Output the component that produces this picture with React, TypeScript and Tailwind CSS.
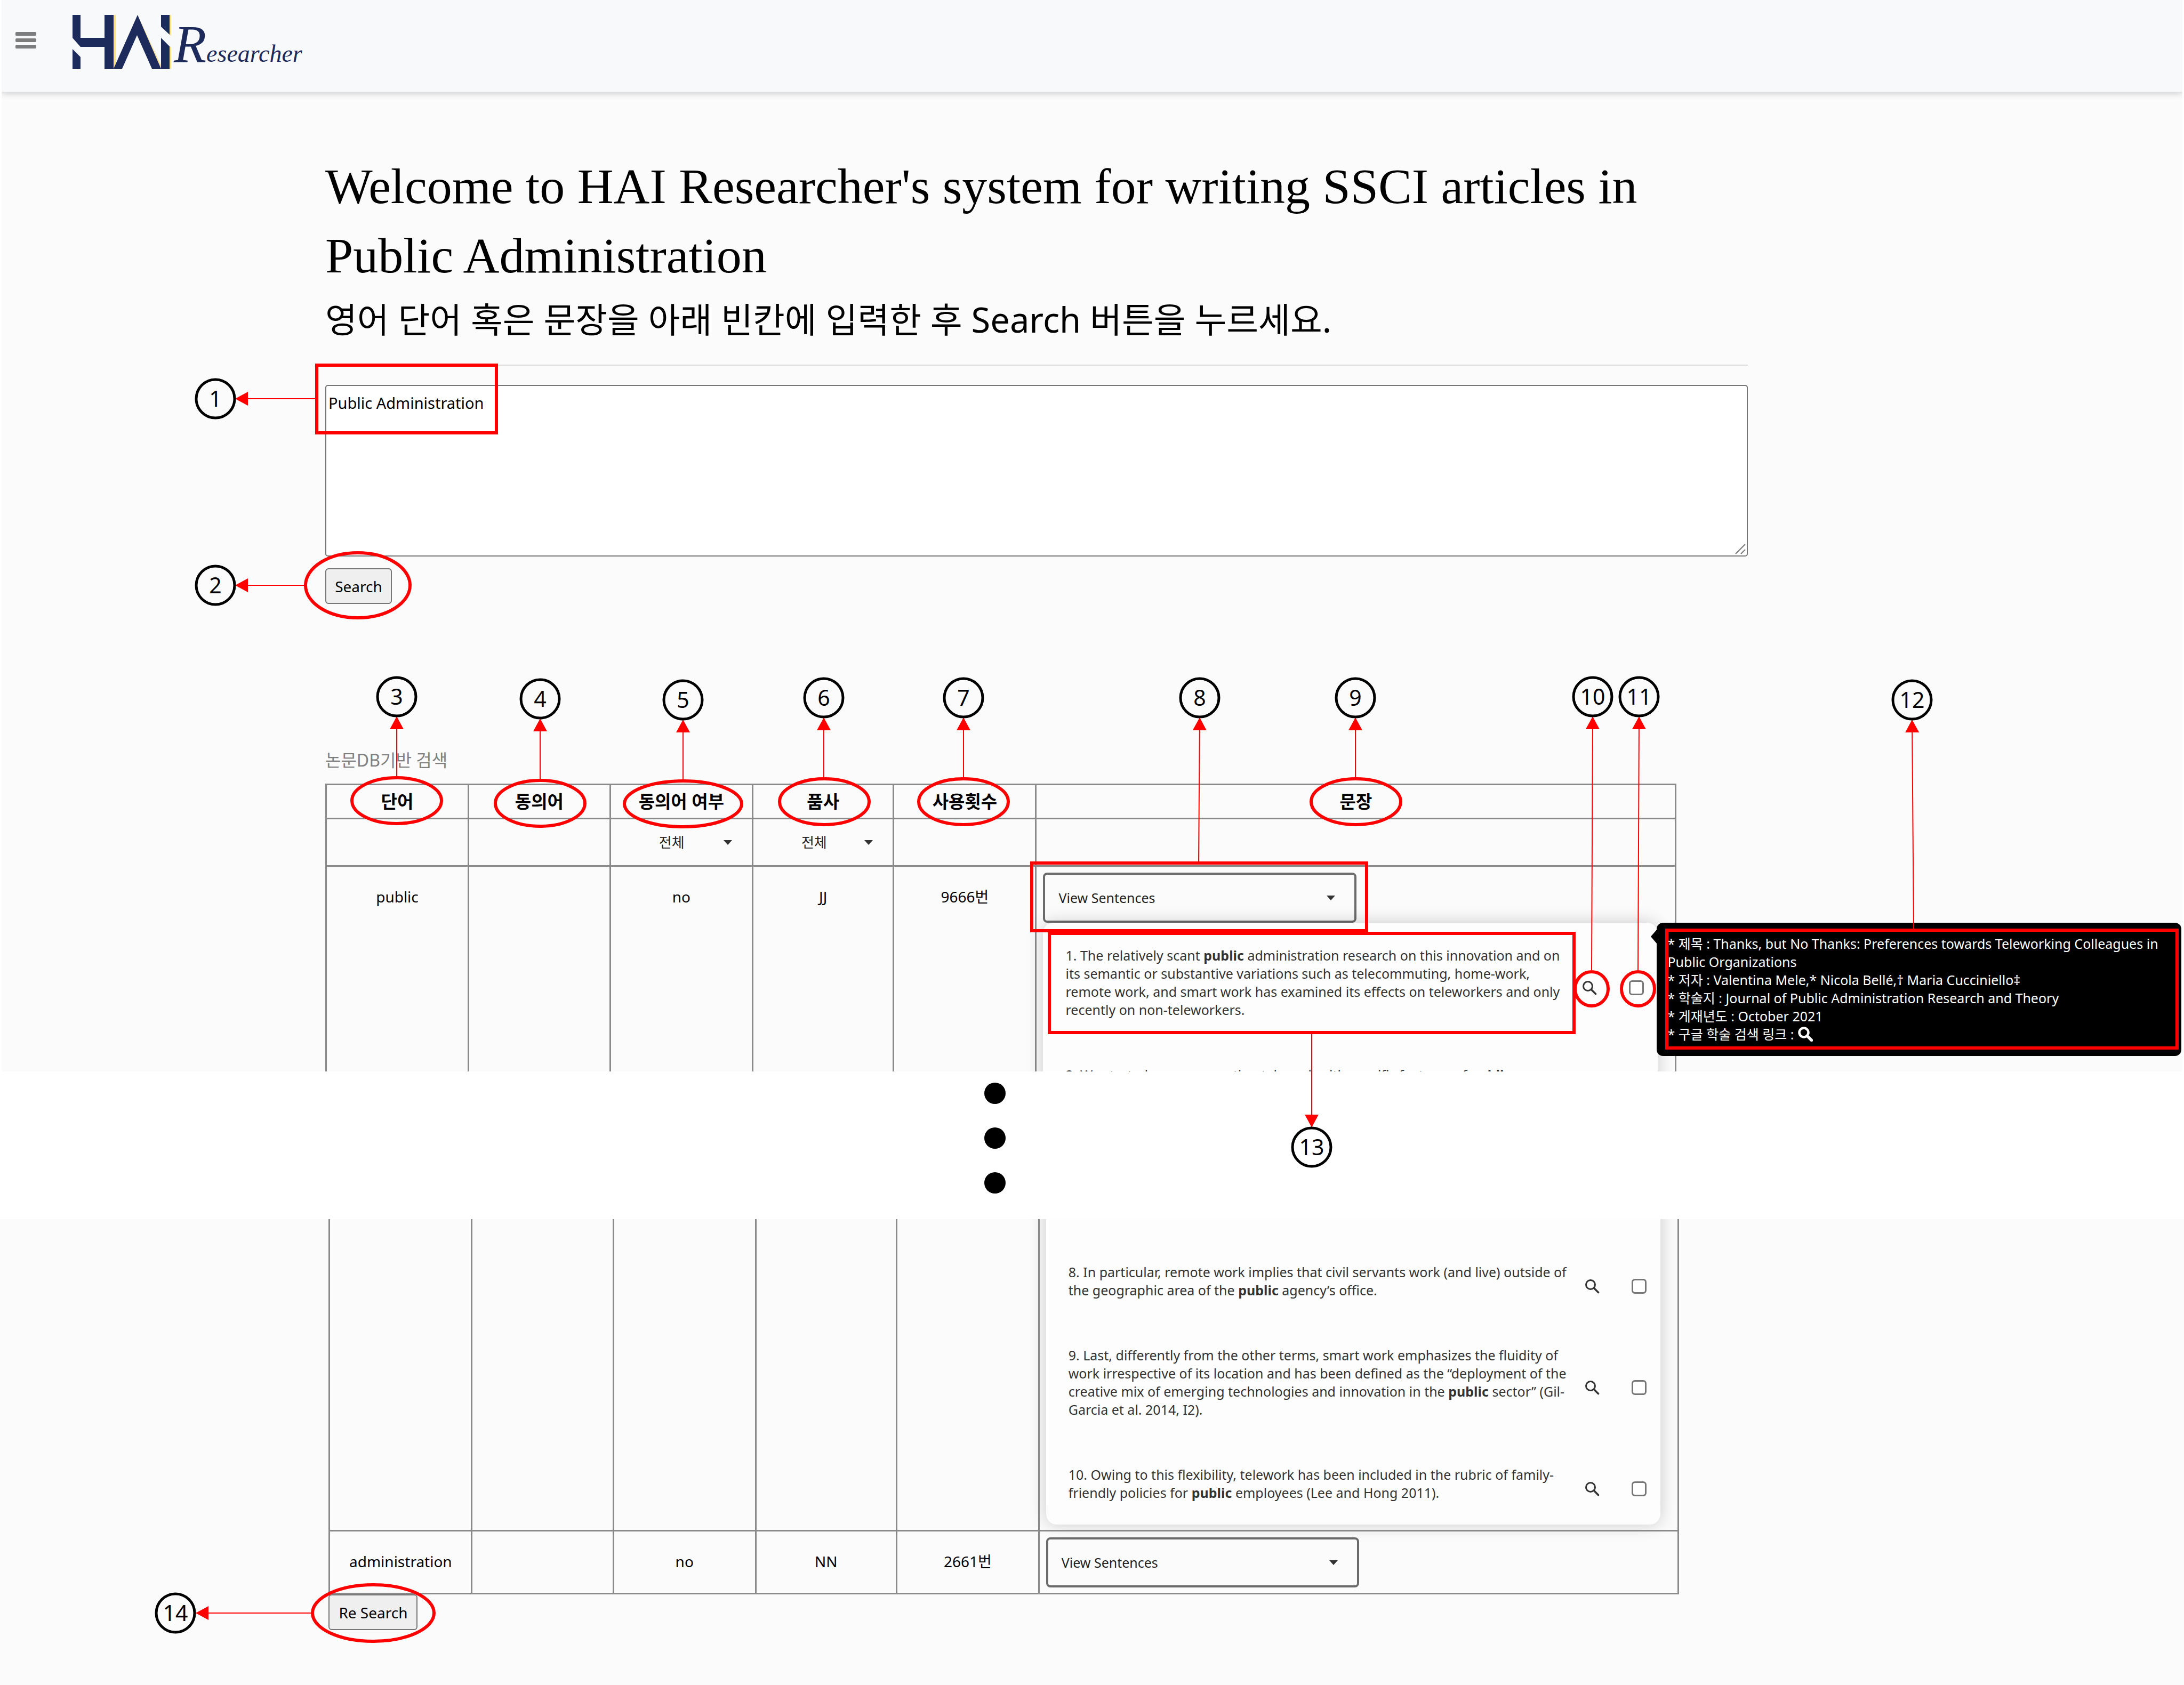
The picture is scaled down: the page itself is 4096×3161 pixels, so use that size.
import type { ReactNode } from "react";

const SANS = "font-['Noto_Sans','Noto_Sans_CJK_KR',sans-serif]";

function Caret() {
  return (
    <svg viewBox="0 0 16 9" className="w-4 h-[9px]" aria-hidden="true">
      <path d="M0 0H16L8 9Z" fill="#333" />
    </svg>
  );
}

function SearchGlyph({ heavy = false }: { heavy?: boolean }) {
  return (
    <svg viewBox="0 0 28 28" className="w-7 h-7" fill="none" stroke="currentColor" aria-hidden="true">
      <circle cx="11" cy="11" r="8.5" strokeWidth={heavy ? 4.5 : 3} />
      <path d="M17.5 17.5L25.5 25.5" strokeWidth={heavy ? 5.5 : 3.6} strokeLinecap="round" />
    </svg>
  );
}

function Logo() {
  return (
    <a href="#home" aria-label="HAI Researcher" className="flex items-start text-[#1d2b5c]">
      <svg viewBox="0 0 190 102" className="w-[190px] h-[102px]" aria-hidden="true">
        <g fill="#fbe08f">
          <rect x="77" y="0" width="4" height="101" />
          <path d="M122 0L167 97V101H163L121 8Z" />
          <path d="M182 0H185V40L182 36Z" />
          <path d="M182 58L185 61V101H182Z" />
        </g>
        <g fill="#1d2b5c">
          <path d="M0 0H15V43H60V0H77V101H60V60H15L0 43Z" />
          <path d="M0 64L15 79V101H0Z" />
          <path d="M122 0L166 101H149L121 38L93 101H77Z" />
          <path d="M166 0H182V37L166 22Z" />
          <path d="M166 43L182 59V101H166Z" />
        </g>
      </svg>
      <span className="flex items-baseline font-['Liberation_Serif',serif] italic leading-[110px]">
        <span className="text-[100px]">R</span>
        <span className="text-[46px]">esearcher</span>
      </span>
    </a>
  );
}

function SentencesSelect({ word }: { word: string }) {
  return (
    <div className="relative w-[51%]">
      <select
        aria-label={`Sentences for ${word}`}
        className="appearance-none block w-full h-[94px] pl-[25px] border-4 border-[#6b6b6b] rounded-lg bg-[#fbfbfb] text-[25px] leading-[40px] text-[#222]"
      >
        <option>View Sentences</option>
      </select>
      <span className="absolute right-10 inset-y-0 flex items-center pointer-events-none"><Caret /></span>
    </div>
  );
}

function FilterSelect({ label }: { label: string }) {
  return (
    <div className="relative">
      <select
        aria-label={label}
        className="appearance-none block w-full h-[70px] pl-[90px] bg-transparent text-[26px] leading-[40px] text-[#222]"
      >
        <option>전체</option>
      </select>
      <span className="absolute right-[37px] inset-y-0 flex items-center pointer-events-none"><Caret /></span>
    </div>
  );
}

function Sentence({ n, lines }: { n: number; lines: ReactNode[] }) {
  return (
    <li className="flex items-center h-[138px] pl-[42px] pr-[26px]">
      <p className="grow whitespace-nowrap text-[25px] leading-[34px] text-[#333]">
        {lines.map((line, i) => (
          <span key={i} className="block">{line}</span>
        ))}
      </p>
      <div className="flex items-center gap-[60px] pt-5">
        <button type="button" aria-label={`Look up sentence ${n}`} className="text-[#333]"><SearchGlyph /></button>
        <input
          type="checkbox"
          aria-label={`Select sentence ${n}`}
          className="appearance-none block w-7 h-7 border-[3px] border-[#767676] rounded-[6px] bg-white"
        />
      </div>
    </li>
  );
}

function SourceTooltip() {
  return (
    <div
      role="tooltip"
      className="absolute top-0 left-full -ml-0.5 w-[984px] h-[250px] pl-5 pt-[22px] rounded-xl bg-black text-white text-[25px] leading-[34px] whitespace-nowrap"
    >
      <svg viewBox="0 0 12 28" className="absolute -left-[11px] top-3 w-3 h-7" aria-hidden="true">
        <path d="M12 0V28L0 14Z" fill="#000" />
      </svg>
      <p>* 제목 : Thanks, but No Thanks: Preferences towards Teleworking Colleagues in<br />Public Organizations</p>
      <p>* 저자 : Valentina Mele,* Nicola Bellé,† Maria Cucciniello‡</p>
      <p>* 학술지 : Journal of Public Administration Research and Theory</p>
      <p>* 게재년도 : October 2021</p>
      <p className="flex items-center gap-2">
        <span>* 구글 학술 검색 링크 :</span>
        <a href="#scholar" aria-label="Google Scholar"><SearchGlyph heavy /></a>
      </p>
    </div>
  );
}

function Columns() {
  return (
    <colgroup>
      <col className="w-[10.55%]" />
      <col className="w-[10.5%]" />
      <col className="w-[10.55%]" />
      <col className="w-[10.45%]" />
      <col className="w-[10.55%]" />
      <col />
    </colgroup>
  );
}

const td = "border-[3px] border-[#8a8a8a] p-0 pt-[11px] align-top text-center text-[28px] leading-[90px]";
const th = "border-[3px] border-[#8a8a8a] p-0 h-[64px] text-[33px] leading-[50px] font-bold";
const heads = ["단어", "동의어", "동의어 여부", "품사", "사용횟수", "문장"];
const empty = "border-[3px] border-[#8a8a8a] p-0 h-[89px]";

type Mark = {
  n: number;
  c: [number, number];
  line: [number, number, number, number];
  e?: [number, number, number, number];
  r?: [number, number, number, number];
};

const marks: Mark[] = [
  { n: 1, c: [404, 748], line: [591, 748, 441, 748], r: [594, 685, 337, 127] },
  { n: 2, c: [404, 1098], line: [571, 1098, 441, 1098], e: [671, 1098, 98, 61] },
  { n: 3, c: [744, 1307], line: [744, 1457, 744, 1344], e: [744, 1502, 84, 43] },
  { n: 4, c: [1013, 1311], line: [1013, 1461, 1013, 1348], e: [1013, 1507, 84, 43] },
  { n: 5, c: [1281, 1313], line: [1281, 1463, 1281, 1350], e: [1281, 1508, 110, 43] },
  { n: 6, c: [1545, 1309], line: [1545, 1458, 1545, 1346], e: [1546, 1504, 84, 43] },
  { n: 7, c: [1807, 1309], line: [1807, 1458, 1807, 1346], e: [1807, 1504, 84, 43] },
  { n: 8, c: [2250, 1309], line: [2248, 1616, 2250, 1346], r: [1935, 1619, 628, 127] },
  { n: 9, c: [2542, 1309], line: [2542, 1458, 2542, 1346], e: [2543, 1504, 84, 43] },
  { n: 10, c: [2987, 1307], line: [2985, 1820, 2987, 1344], e: [2985, 1855, 31, 32] },
  { n: 11, c: [3074, 1307], line: [3072, 1820, 3074, 1344], e: [3072, 1855, 31, 32] },
  { n: 12, c: [3586, 1313], line: [3589, 1742, 3586, 1350], r: [3126, 1745, 957, 221] },
  { n: 13, c: [2460, 2152], line: [2460, 1940, 2460, 2115], r: [1968, 1751, 984, 186] },
  { n: 14, c: [329, 3026], line: [583, 3026, 367, 3026], e: [700, 3026, 114, 53] },
];

function Annotations() {
  return (
    <svg viewBox="0 0 4096 3161" className="absolute inset-x-0 top-0 w-full pointer-events-none">
      <defs>
        <marker id="head" markerUnits="userSpaceOnUse" markerWidth="24" markerHeight="26" refX="24" refY="13" orient="auto">
          <path d="M0 0L24 13L0 26Z" fill="#f00" />
        </marker>
      </defs>
      {marks.map(({ n, c, line, e, r }) => (
        <g key={n} fill="none">
          {r && <rect x={r[0]} y={r[1]} width={r[2]} height={r[3]} stroke="#f00" strokeWidth="6" />}
          {e && <ellipse cx={e[0]} cy={e[1]} rx={e[2]} ry={e[3]} stroke="#f00" strokeWidth="6" />}
          <line x1={line[0]} y1={line[1]} x2={line[2]} y2={line[3]} stroke="#f00" strokeWidth="2" markerEnd="url(#head)" />
          <circle cx={c[0]} cy={c[1]} r="36" stroke="#000" strokeWidth="5" />
          <text x={c[0]} y={c[1] + 15} textAnchor="middle" fill="#000" className="text-[41px]">{n}</text>
        </g>
      ))}
    </svg>
  );
}

export default function App() {
  return (
    <div className={`relative flex flex-col min-h-screen overflow-hidden bg-white text-black ${SANS}`}>
      <section className="h-[2010px] mx-[3px] overflow-hidden bg-[#fbfbfb]">
        <header className="relative flex items-start h-[172px] pl-[26px] bg-[#f8f9fb] shadow-[0_3px_12px_rgba(0,0,0,0.2)]">
          <button type="button" aria-label="Menu" className="flex flex-col gap-[5px] mt-[60px]">
            <span className="block w-[39px] h-[7px] rounded-[2px] bg-[#7d7d7d]" />
            <span className="block w-[39px] h-[7px] rounded-[2px] bg-[#7d7d7d]" />
            <span className="block w-[39px] h-[7px] rounded-[2px] bg-[#7d7d7d]" />
          </button>
          <div className="ml-[68px] mt-7"><Logo /></div>
        </header>

        <main className="ml-[14.84%] w-[65.23%] pt-[112px]">
          <h1 className="font-['Liberation_Serif',serif] text-[94px] leading-[130px]">
            Welcome to HAI Researcher's system for writing SSCI articles in Public Administration
          </h1>
          <h2 className="text-[65px] leading-[110px]">
            영어 단어 혹은 문장을 아래 빈칸에 입력한 후 Search 버튼을 누르세요.
          </h2>
          <hr className="mt-[30px] border-t-2 border-[#dcdcdc]" />
          <form className="pt-9">
            <div className="relative">
              <textarea
                aria-label="Search text"
                defaultValue="Public Administration"
                className="block w-full h-[322px] px-1 py-3 border-2 border-[#767676] rounded-[5px] bg-white resize-none text-[29px] leading-[40px]"
              />
              <svg viewBox="0 0 20 20" className="absolute right-1 bottom-1 w-5 h-5" stroke="#777" strokeWidth="2" aria-hidden="true">
                <path d="M1 19L19 1M11 19L19 11" />
              </svg>
            </div>
            <button type="button" className="block mt-[22px] w-[125px] h-[67px] border-2 border-[#767676] rounded-[6px] bg-[#efefef] text-[28px]">
              Search
            </button>
          </form>

          <p className="mt-[269px] mb-5 text-[32px] leading-[48px] text-[#808080]">논문DB기반 검색</p>

          <table className="w-[95%] table-fixed border-collapse">
            <Columns />
            <thead>
              <tr>
                {heads.map((h) => (
                  <th key={h} scope="col" className={th}>{h}</th>
                ))}
              </tr>
              <tr>
                <td className={empty} />
                <td className={empty} />
                <td className={empty}><FilterSelect label="동의어 여부" /></td>
                <td className={empty}><FilterSelect label="품사" /></td>
                <td className={empty} />
                <td className={empty} />
              </tr>
            </thead>
            <tbody>
              <tr>
                <td className={td}>public</td>
                <td className={td} />
                <td className={td}>no</td>
                <td className={td}>JJ</td>
                <td className={td}>9666번</td>
                <td className={`${td} pl-3 pr-8 text-left`}>
                  <SentencesSelect word="public" />
                  <div className="relative rounded-[20px] bg-[#fdfdfd] shadow-[0_0_32px_rgba(0,0,0,0.2)]">
                    <ol className="flex flex-col gap-[52px] pt-[43px] pb-2">
                      <Sentence
                        n={1}
                        lines={[
                          <>1. The relatively scant <b>public</b> administration research on this innovation and on</>,
                          "its semantic or substantive variations such as telecommuting, home-work,",
                          "remote work, and smart work has examined its effects on teleworkers and only",
                          "recently on non-teleworkers.",
                        ]}
                      />
                      <Sentence
                        n={2}
                        lines={[<>2. We started our conversation telework with specific features of <b>public</b></>, "organizations."]}
                      />
                    </ol>
                    <SourceTooltip />
                  </div>
                </td>
              </tr>
            </tbody>
          </table>
        </main>
      </section>

      <div className="flex flex-col items-center justify-center gap-11 h-[277px] pr-[364px] pb-7" aria-hidden="true">
        <span className="w-10 h-10 rounded-full bg-black" />
        <span className="w-10 h-10 rounded-full bg-black" />
        <span className="w-10 h-10 rounded-full bg-black" />
      </div>

      <section className="grow overflow-hidden bg-[#fbfbfb]">
        <div className="ml-[15.05%] w-[61.82%]">
          <table className="w-full table-fixed border-collapse">
            <Columns />
            <tbody>
              <tr>
                {[0, 1, 2, 3, 4].map((i) => (
                  <td key={i} className="border-[3px] border-t-0 border-[#8a8a8a] p-0" />
                ))}
                <td className="border-[3px] border-t-0 border-[#8a8a8a] pt-0 pb-[10px] pl-3 pr-8">
                  <div className="-mt-[60px] rounded-[20px] bg-[#fdfdfd] shadow-[0_0_32px_rgba(0,0,0,0.2)]">
                    <ol start={8} className="flex flex-col gap-[52px] pt-[107px] pb-2">
                      <Sentence
                        n={8}
                        lines={[
                          "8. In particular, remote work implies that civil servants work (and live) outside of",
                          <>the geographic area of the <b>public</b> agency’s office.</>,
                        ]}
                      />
                      <Sentence
                        n={9}
                        lines={[
                          "9. Last, differently from the other terms, smart work emphasizes the fluidity of",
                          "work irrespective of its location and has been defined as the “deployment of the",
                          <>creative mix of emerging technologies and innovation in the <b>public</b> sector” (Gil-</>,
                          "Garcia et al. 2014, I2).",
                        ]}
                      />
                      <Sentence
                        n={10}
                        lines={[
                          "10. Owing to this flexibility, telework has been included in the rubric of family-",
                          <>friendly policies for <b>public</b> employees (Lee and Hong 2011).</>,
                        ]}
                      />
                    </ol>
                  </div>
                </td>
              </tr>
              <tr>
                <td className={td}>administration</td>
                <td className={td} />
                <td className={td}>no</td>
                <td className={td}>NN</td>
                <td className={td}>2661번</td>
                <td className={`${td} pl-3 pr-8 pb-[10px] text-left`}><SentencesSelect word="administration" /></td>
              </tr>
            </tbody>
          </table>
          <button type="button" className="block w-[167px] h-[67px] border-2 border-[#767676] rounded-[6px] bg-[#efefef] text-[28px]">
            Re Search
          </button>
        </div>
      </section>

      <Annotations />
    </div>
  );
}
